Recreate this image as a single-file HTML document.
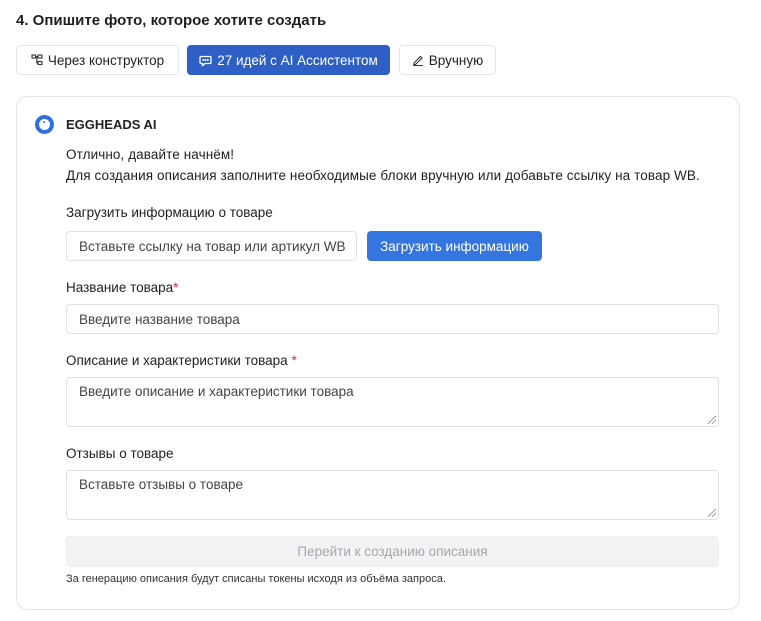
<!DOCTYPE html>
<html><head><meta charset="utf-8"><style>
*{box-sizing:border-box;margin:0;padding:0}
body{width:761px;height:621px;background:#fff;font-family:"Liberation Sans",Arial,sans-serif;color:#1f1f1f;position:relative;overflow:hidden}
.a{position:absolute;white-space:nowrap}
.btn{position:absolute;border:1px solid #e3e5e8;border-radius:4px;font-size:13.5px;display:flex;align-items:center;justify-content:center;gap:5px;background:#fff}
.inp{position:absolute;border:1px solid #dfe1e5;border-radius:4px;font-size:13.5px;color:#444;padding-left:12px;display:flex;align-items:center;background:#fff}
.ta{align-items:flex-start;padding-top:6px}
.lbl{position:absolute;font-size:13.5px;color:#222}
.grip{position:absolute;right:2px;bottom:2px;width:8px;height:8px;background:linear-gradient(135deg,transparent 45%,#777 45%,#777 52%,transparent 52%,transparent 70%,#777 70%,#777 77%,transparent 77%)}
</style></head><body>
<div class="a" style="left:16px;top:12px;font-size:15px;font-weight:bold">4. Опишите фото, которое хотите создать</div>
<div class="btn" style="left:16px;top:45px;width:163px;height:30px">
<svg width="12" height="12" viewBox="0 0 12 12" fill="none" stroke="#333" stroke-width="1.1"><rect x="1" y="1" width="3.5" height="3" /><rect x="7" y="1" width="4" height="3"/><rect x="7" y="7.5" width="4" height="3"/><path d="M4.5 2.5H7M5.8 2.5V9H7"/></svg>Через конструктор</div>
<div class="btn" style="left:187px;top:45px;width:203px;height:30px;background:#2d5fc4;border-color:#2d5fc4;color:#fff">
<svg width="13" height="13" viewBox="0 0 13 13" fill="none" stroke="#fff" stroke-width="1.3"><path d="M2 2.5h9a1 1 0 0 1 1 1v5a1 1 0 0 1-1 1H6l-2.5 2v-2H2a1 1 0 0 1-1-1v-5a1 1 0 0 1 1-1z"/><circle cx="4.3" cy="6" r=".4"/><circle cx="6.5" cy="6" r=".4"/><circle cx="8.7" cy="6" r=".4"/></svg>27 идей с AI Ассистентом</div>
<div class="btn" style="left:399px;top:45px;width:97px;height:30px">
<svg width="12" height="12" viewBox="0 0 12 12" fill="none" stroke="#333" stroke-width="1.1"><path d="M2 9l6.5-6.5 1.5 1.5L3.5 10.5H2zM1 11.5h10"/></svg>Вручную</div>
<div style="position:absolute;left:16px;top:96px;width:724px;height:514px;border:1px solid #e3e5e8;border-radius:12px"></div>
<div class="a" style="left:35px;top:115px;width:19px;height:19px;border-radius:50%;background:#2f6fe0"></div>
<div class="a" style="left:39px;top:119px;width:11px;height:11px;border-radius:50%;background:#fff"></div>
<div class="a" style="left:43px;top:121px;width:2px;height:2px;border-radius:50%;background:#2f6fe0"></div>
<div class="a" style="left:66px;top:117px;font-size:13px;font-weight:bold;color:#222">EGGHEADS AI</div>
<div class="a" style="left:66px;top:144px;font-size:13.5px;line-height:21px;letter-spacing:0.1px">Отлично, давайте начнём!<br>Для создания описания заполните необходимые блоки вручную или добавьте ссылку на товар WB.</div>
<div class="lbl" style="left:66px;top:205px">Загрузить информацию о товаре</div>
<div class="inp" style="left:66px;top:231px;width:291px;height:30px">Вставьте ссылку на товар или артикул WB</div>
<div class="btn" style="left:367px;top:231px;width:175px;height:30px;background:#3575e0;border-color:#3575e0;color:#fff">Загрузить информацию</div>
<div class="lbl" style="left:66px;top:280px">Название товара<span style="color:#d33">*</span></div>
<div class="inp" style="left:66px;top:304px;width:653px;height:30px">Введите название товара</div>
<div class="lbl" style="left:66px;top:353px">Описание и характеристики товара <span style="color:#d33">*</span></div>
<div class="inp ta" style="left:66px;top:377px;width:653px;height:50px">Введите описание и характеристики товара<div class="grip"></div></div>
<div class="lbl" style="left:66px;top:446px">Отзывы о товаре</div>
<div class="inp ta" style="left:66px;top:470px;width:653px;height:50px">Вставьте отзывы о товаре<div class="grip"></div></div>
<div class="btn" style="left:66px;top:536px;width:653px;height:31px;background:#f2f3f5;border-color:#eceef0;color:#a5a7ab">Перейти к созданию описания</div>
<div class="a" style="left:66px;top:573px;font-size:11px;color:#333">За генерацию описания будут списаны токены исходя из объёма запроса.</div>
</body></html>
